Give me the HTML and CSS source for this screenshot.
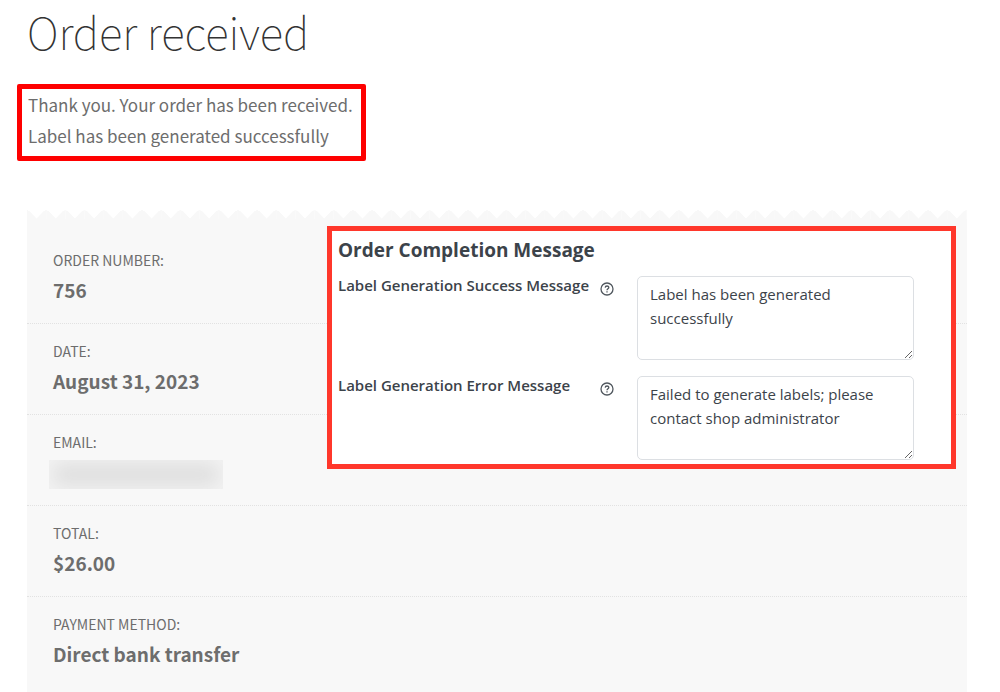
FILE: index.html
```
<!DOCTYPE html>
<html lang="en">
<head>
    <meta charset="UTF-8">
    <meta name="viewport" content="width=device-width, initial-scale=1.0">
    <title>Order received</title>
    <link rel="stylesheet" href="styles.css">
</head>
<body>
    <main class="page">
        <h1 class="page-title">Order received</h1>
        <div class="notice">
            <p>Thank you. Your order has been received.</p>
            <p>Label has been generated successfully</p>
        </div>
        <section class="order">
            <ul class="order-details">
                <li>Order number: <strong>756</strong></li>
                <li>Date: <strong>August 31, 2023</strong></li>
                <li>Email: <span class="hidden-email"></span></li>
                <li>Total: <strong>$26.00</strong></li>
                <li>Payment method: <strong>Direct bank transfer</strong></li>
            </ul>
            <form class="settings">
                <h2>Order Completion Message</h2>
                <div class="field">
                    <label for="success-message">Label Generation Success Message</label>
                    <svg class="help" viewBox="0 0 14 14">
                        <circle cx="7" cy="7" r="6"/>
                        <path d="M5.2 5.6C5.3 3.5 8.8 3.5 8.8 5.5C8.8 6.7 7 6.8 7 8.2M7 9.3V10.6"/>
                    </svg>
                    <textarea id="success-message">Label has been generated successfully</textarea>
                </div>
                <div class="field">
                    <label for="error-message">Label Generation Error Message</label>
                    <svg class="help" viewBox="0 0 14 14">
                        <circle cx="7" cy="7" r="6"/>
                        <path d="M5.2 5.6C5.3 3.5 8.8 3.5 8.8 5.5C8.8 6.7 7 6.8 7 8.2M7 9.3V10.6"/>
                    </svg>
                    <textarea id="error-message">Failed to generate labels; please contact shop administrator</textarea>
                </div>
            </form>
        </section>
    </main>
</body>
</html>
```
FILE: styles.css
```
* {
    box-sizing: border-box;
}
body {
    margin: 0;
    background-color: #fff;
    color: #6d6d6d;
    font-family: "Noto Sans CJK SC", "Open Sans", sans-serif;
    font-size: 17px;
}
.page {
    padding: 0 33px 0 27px;
}
.page-title {
    margin: 0;
    color: #333;
    font-size: 44px;
    font-weight: 100;
    line-height: 62px;
}
.notice {
    width: fit-content;
    margin: 22px 0 48px -10px;
    padding: 0 8px 5px 6px;
    border: 5px solid #fe0000;
    border-radius: 2px;
}
.notice p {
    margin: 0;
    line-height: 31px;
}
.order {
    position: relative;
}
/* torn paper edge */
.order::before {
    content: "";
    display: block;
    height: 10px;
    background-image: linear-gradient(45deg, #f8f8f8 7px, transparent 7px), linear-gradient(-45deg, #f8f8f8 7px, transparent 7px);
    background-size: 19px 10px;
    background-repeat: round no-repeat;
}
.order-details {
    margin: 0;
    padding: 14px 0 0;
    list-style: none;
    background-color: #f8f8f8;
}
.order-details li {
    height: 91px;
    padding: 17px 26px 0;
    border-bottom: 1px dotted #e2e2e2;
    font-size: 14px;
    line-height: 20px;
    text-transform: uppercase;
}
.order-details li:last-child {
    height: 96px;
    border-bottom: none;
}
.order-details strong {
    display: block;
    padding-top: 5px;
    font-size: 19px;
    font-weight: 700;
    line-height: 30px;
    text-transform: none;
}
.hidden-email {
    display: block;
    width: 174px;
    height: 29px;
    margin: 8px 0 0 -4px;
    background-color: #dcdcdc;
    box-shadow: inset 0 0 20px 4px #f4f4f4;
}
.settings {
    position: absolute;
    top: 17px;
    left: 300px;
    right: 11px;
    padding: 4px 37px 4px 6px;
    border: 5px solid #ff372b;
    background-color: #fff;
    color: #3c434a;
    font-family: "Open Sans", sans-serif;
}
.settings h2 {
    margin: 0 0 11px;
    font-size: 19px;
    font-weight: 700;
    line-height: 30px;
}
.field {
    display: grid;
    grid-template-columns: 262px 14px 1fr;
    align-items: start;
}
.field + .field {
    margin-top: 16px;
}
.field label {
    font-size: 15px;
    font-weight: 600;
    line-height: 18px;
}
.help {
    width: 14px;
    height: 14px;
    margin-top: 6px;
    fill: none;
    stroke: #50575e;
    stroke-width: 1.3;
}
.field textarea {
    height: 84px;
    margin-left: 23px;
    padding: 5px 12px;
    border: 1px solid #dcdfe3;
    border-radius: 5px;
    background-color: #fff;
    color: #3c434a;
    font-family: "Open Sans", sans-serif;
    font-size: 15px;
    line-height: 24px;
}
```
